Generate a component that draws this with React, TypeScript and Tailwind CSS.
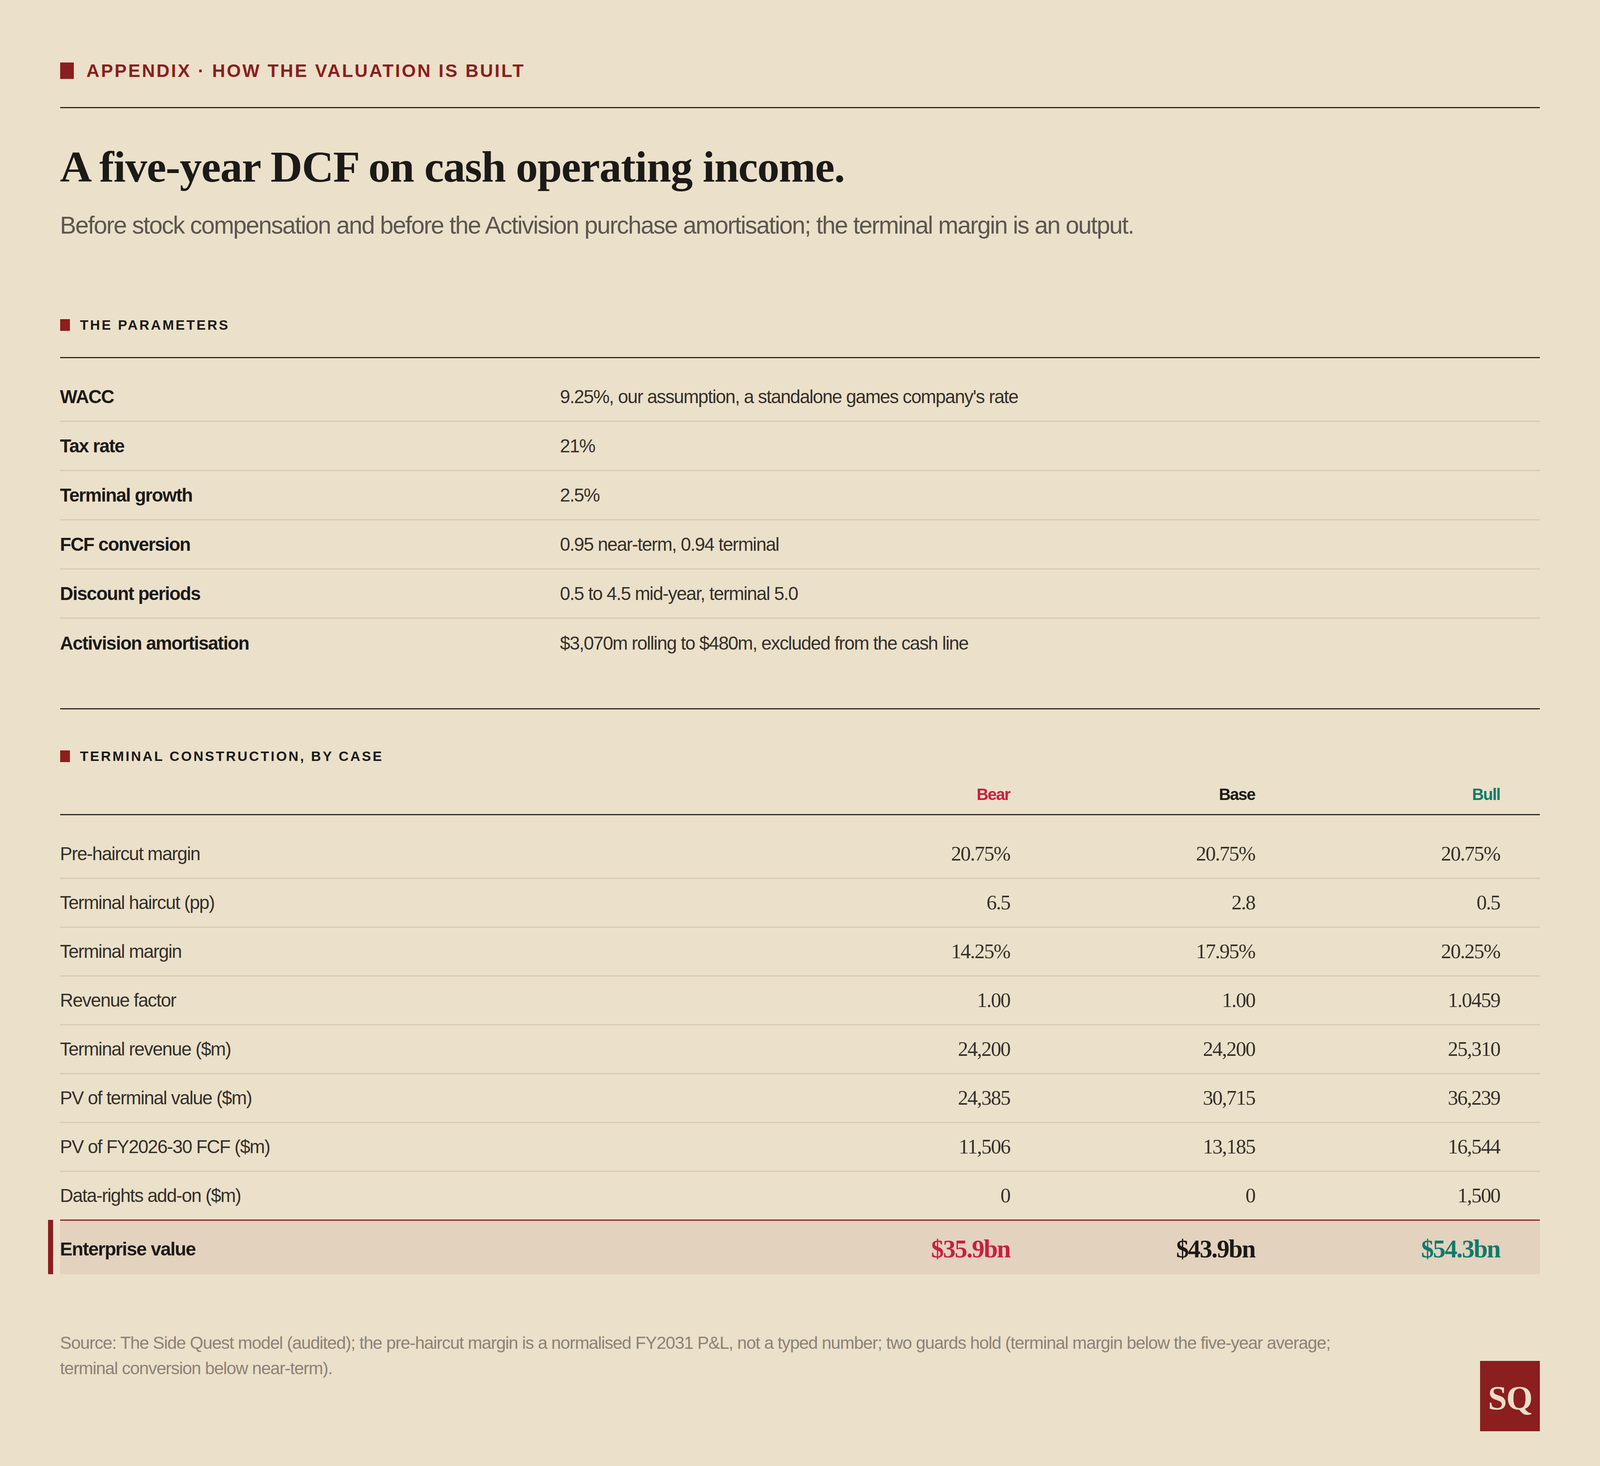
import React from "react";

const params: [string, string][] = [
  ["WACC", "9.25%, our assumption, a standalone games company's rate"],
  ["Tax rate", "21%"],
  ["Terminal growth", "2.5%"],
  ["FCF conversion", "0.95 near-term, 0.94 terminal"],
  ["Discount periods", "0.5 to 4.5 mid-year, terminal 5.0"],
  ["Activision amortisation", "$3,070m rolling to $480m, excluded from the cash line"],
];

const terminal: [string, string, string, string][] = [
  ["Pre-haircut margin", "20.75%", "20.75%", "20.75%"],
  ["Terminal haircut (pp)", "6.5", "2.8", "0.5"],
  ["Terminal margin", "14.25%", "17.95%", "20.25%"],
  ["Revenue factor", "1.00", "1.00", "1.0459"],
  ["Terminal revenue ($m)", "24,200", "24,200", "25,310"],
  ["PV of terminal value ($m)", "24,385", "30,715", "36,239"],
  ["PV of FY2026-30 FCF ($m)", "11,506", "13,185", "16,544"],
  ["Data-rights add-on ($m)", "0", "0", "1,500"],
];

function SectionLabel({ children }: { children: React.ReactNode }) {
  return (
    <div className="flex items-center gap-[0.625vw]">
      <span className="block w-[0.625vw] h-[0.8vh] bg-[#8b1e1e]" />
      <span className="text-[calc(0.3958vw+0.5063vh)] leading-[1.0125vh] font-bold tracking-[calc(0.1458vw+(1vw-1.279vh)*0.247)] text-[#1c1a17] uppercase">
        {children}
      </span>
    </div>
  );
}

export default function App() {
  return (
    <div className="min-h-screen w-full bg-[#ebe0c9] font-['Liberation_Sans',Arial,sans-serif] px-[3.75vw] pt-[4.157vh]">
      {/* Eyebrow */}
      <div className="flex items-center gap-[0.771vw] h-[1.332vh]">
        <span className="block w-[0.875vw] h-[1.119vh] bg-[#8b1e1e]" />
        <span className="text-[calc(0.5208vw+0.6661vh)] leading-[1.332vh] font-bold tracking-[calc(0.15vw+(1vw-1.279vh)*0.305)] text-[#8b1e1e]">
          APPENDIX · HOW THE VALUATION IS BUILT
        </span>
      </div>
      <div className="mt-[1.812vh] border-t-[0.08vh] border-[#2b2723]" />

      {/* Title */}
      <h1 className="mt-[2.371vh] font-['Liberation_Serif',Times,serif] font-bold text-[calc(1.2708vw+1.6254vh)] leading-[3.251vh] tracking-[calc(0.0625vw+(1vw-1.279vh)*0.574)] text-[#1c1a17]">
        A five-year DCF on cash operating income.
      </h1>
      <p className="mt-[1.492vh] text-[calc(0.6979vw+0.8926vh)] leading-[1.759vh] tracking-[calc((1vw-1.279vh)*0.32)] text-[#5c5650] whitespace-nowrap">
        Before stock compensation and before the Activision purchase amortisation; the terminal margin is an output.
      </p>

      {/* Parameters */}
      <div className="mt-[5.409vh]">
        <SectionLabel>The parameters</SectionLabel>
      </div>
      <div className="mt-[1.679vh] border-t-[0.08vh] border-[#2b2723]" />
      <div className="pt-[0.986vh]">
        {params.map(([k, v], i) => (
          <div
            key={k}
            className={
              "grid grid-cols-[31.25vw_1fr] items-center h-[3.357vh] text-[calc(0.53125vw+0.6795vh)] leading-[1.36vh] tracking-[calc((1vw-1.279vh)*0.24)] " +
              (i < params.length - 1 ? "border-b-[0.08vh] border-[#d6cab5]" : "")
            }
          >
            <span className="font-bold text-[#1c1a17]">{k}</span>
            <span className="text-[#34302b]">{v}</span>
          </div>
        ))}
      </div>
      <div className="mt-[2.744vh] border-t-[0.08vh] border-[#2b2723]" />

      {/* Terminal construction */}
      <div className="mt-[2.691vh]">
        <SectionLabel>Terminal construction, by case</SectionLabel>
      </div>
      <div className="mt-[1.492vh] grid grid-cols-[1fr_15.3125vw_15.3125vw_15.3125vw] pb-[0.746vh] border-b-[0.08vh] border-[#2b2723] text-[calc(0.46875vw+0.5995vh)] leading-[1.199vh] tracking-[calc((1vw-1.279vh)*0.26)] font-bold">
        <span />
        <span className="text-right pr-[2.5vw] text-[#c8203f]">Bear</span>
        <span className="text-right pr-[2.5vw] text-[#1c1a17]">Base</span>
        <span className="text-right pr-[2.5vw] text-[#0e7a6c]">Bull</span>
      </div>
      <div className="pt-[1.0125vh]">
        {terminal.map(([label, a, b, c], i) => (
          <div
            key={label}
            className={
              "grid grid-cols-[1fr_15.3125vw_15.3125vw_15.3125vw] items-center text-[#34302b] " +
              (i < terminal.length - 1 ? "h-[3.331vh] border-b-[0.08vh] border-[#d6cab5]" : "h-[3.251vh]")
            }
          >
            <span className="text-[calc(0.53125vw+0.6795vh)] leading-[1.36vh] tracking-[calc((1vw-1.279vh)*0.24)]">
              {label}
            </span>
            {[a, b, c].map((n, j) => (
              <span
                key={j}
                className="text-right pr-[2.5vw] font-['Liberation_Serif',Times,serif] text-[calc(0.59375vw+0.7594vh)] leading-[1.52vh] tracking-[calc((1vw-1.279vh)*0.28)]"
              >
                {n}
              </span>
            ))}
          </div>
        ))}
        <div className="relative grid grid-cols-[1fr_15.3125vw_15.3125vw_15.3125vw] items-center h-[3.73vh] pt-[0.213vh] border-t-[0.1vh] border-[#8b1e1e] bg-[#e3d2bd]">
          <span className="absolute left-[-0.75vw] top-[-0.053vh] bottom-0 w-[0.3125vw] bg-[#8b1e1e]" />
          <span className="text-[calc(0.5417vw+0.6928vh)] leading-[1.4vh] tracking-[calc((1vw-1.279vh)*0.25)] font-bold text-[#1c1a17]">
            Enterprise value
          </span>
          <span className="text-right pr-[2.5vw] font-['Liberation_Serif',Times,serif] font-bold text-[calc(0.7292vw+0.9326vh)] leading-[1.87vh] tracking-[calc((1vw-1.279vh)*0.33)] text-[#c8203f]">
            $35.9bn
          </span>
          <span className="text-right pr-[2.5vw] font-['Liberation_Serif',Times,serif] font-bold text-[calc(0.7292vw+0.9326vh)] leading-[1.87vh] tracking-[calc((1vw-1.279vh)*0.33)] text-[#1c1a17]">
            $43.9bn
          </span>
          <span className="text-right pr-[2.5vw] font-['Liberation_Serif',Times,serif] font-bold text-[calc(0.7292vw+0.9326vh)] leading-[1.87vh] tracking-[calc((1vw-1.279vh)*0.33)] text-[#0e7a6c]">
            $54.3bn
          </span>
        </div>
      </div>

      {/* Footer */}
      <div className="mt-[3.81vh] flex items-start justify-between gap-[2vw]">
        <p className="min-w-0 text-[calc(0.5vw+0.6395vh)] leading-[1.732vh] tracking-[calc((1vw-1.279vh)*0.19)] text-[#8c8278]">
          Source: The Side Quest model (audited); the pre-haircut margin is a normalised FY2031 P&amp;L, not a typed number; two guards hold (terminal margin below the five-year average;
          <br />
          terminal conversion below near-term).
        </p>
        <div className="mt-[2.105vh] shrink-0 w-[3.75vw] h-[4.796vh] bg-[#8b1e1e] flex items-center justify-center pt-[0.27vh]">
          <span className="font-['Liberation_Serif',Times,serif] font-bold text-[calc(0.9792vw+1.2523vh)] leading-none tracking-[-0.0417vw] text-[#ecdfc8]">
            SQ
          </span>
        </div>
      </div>
    </div>
  );
}
